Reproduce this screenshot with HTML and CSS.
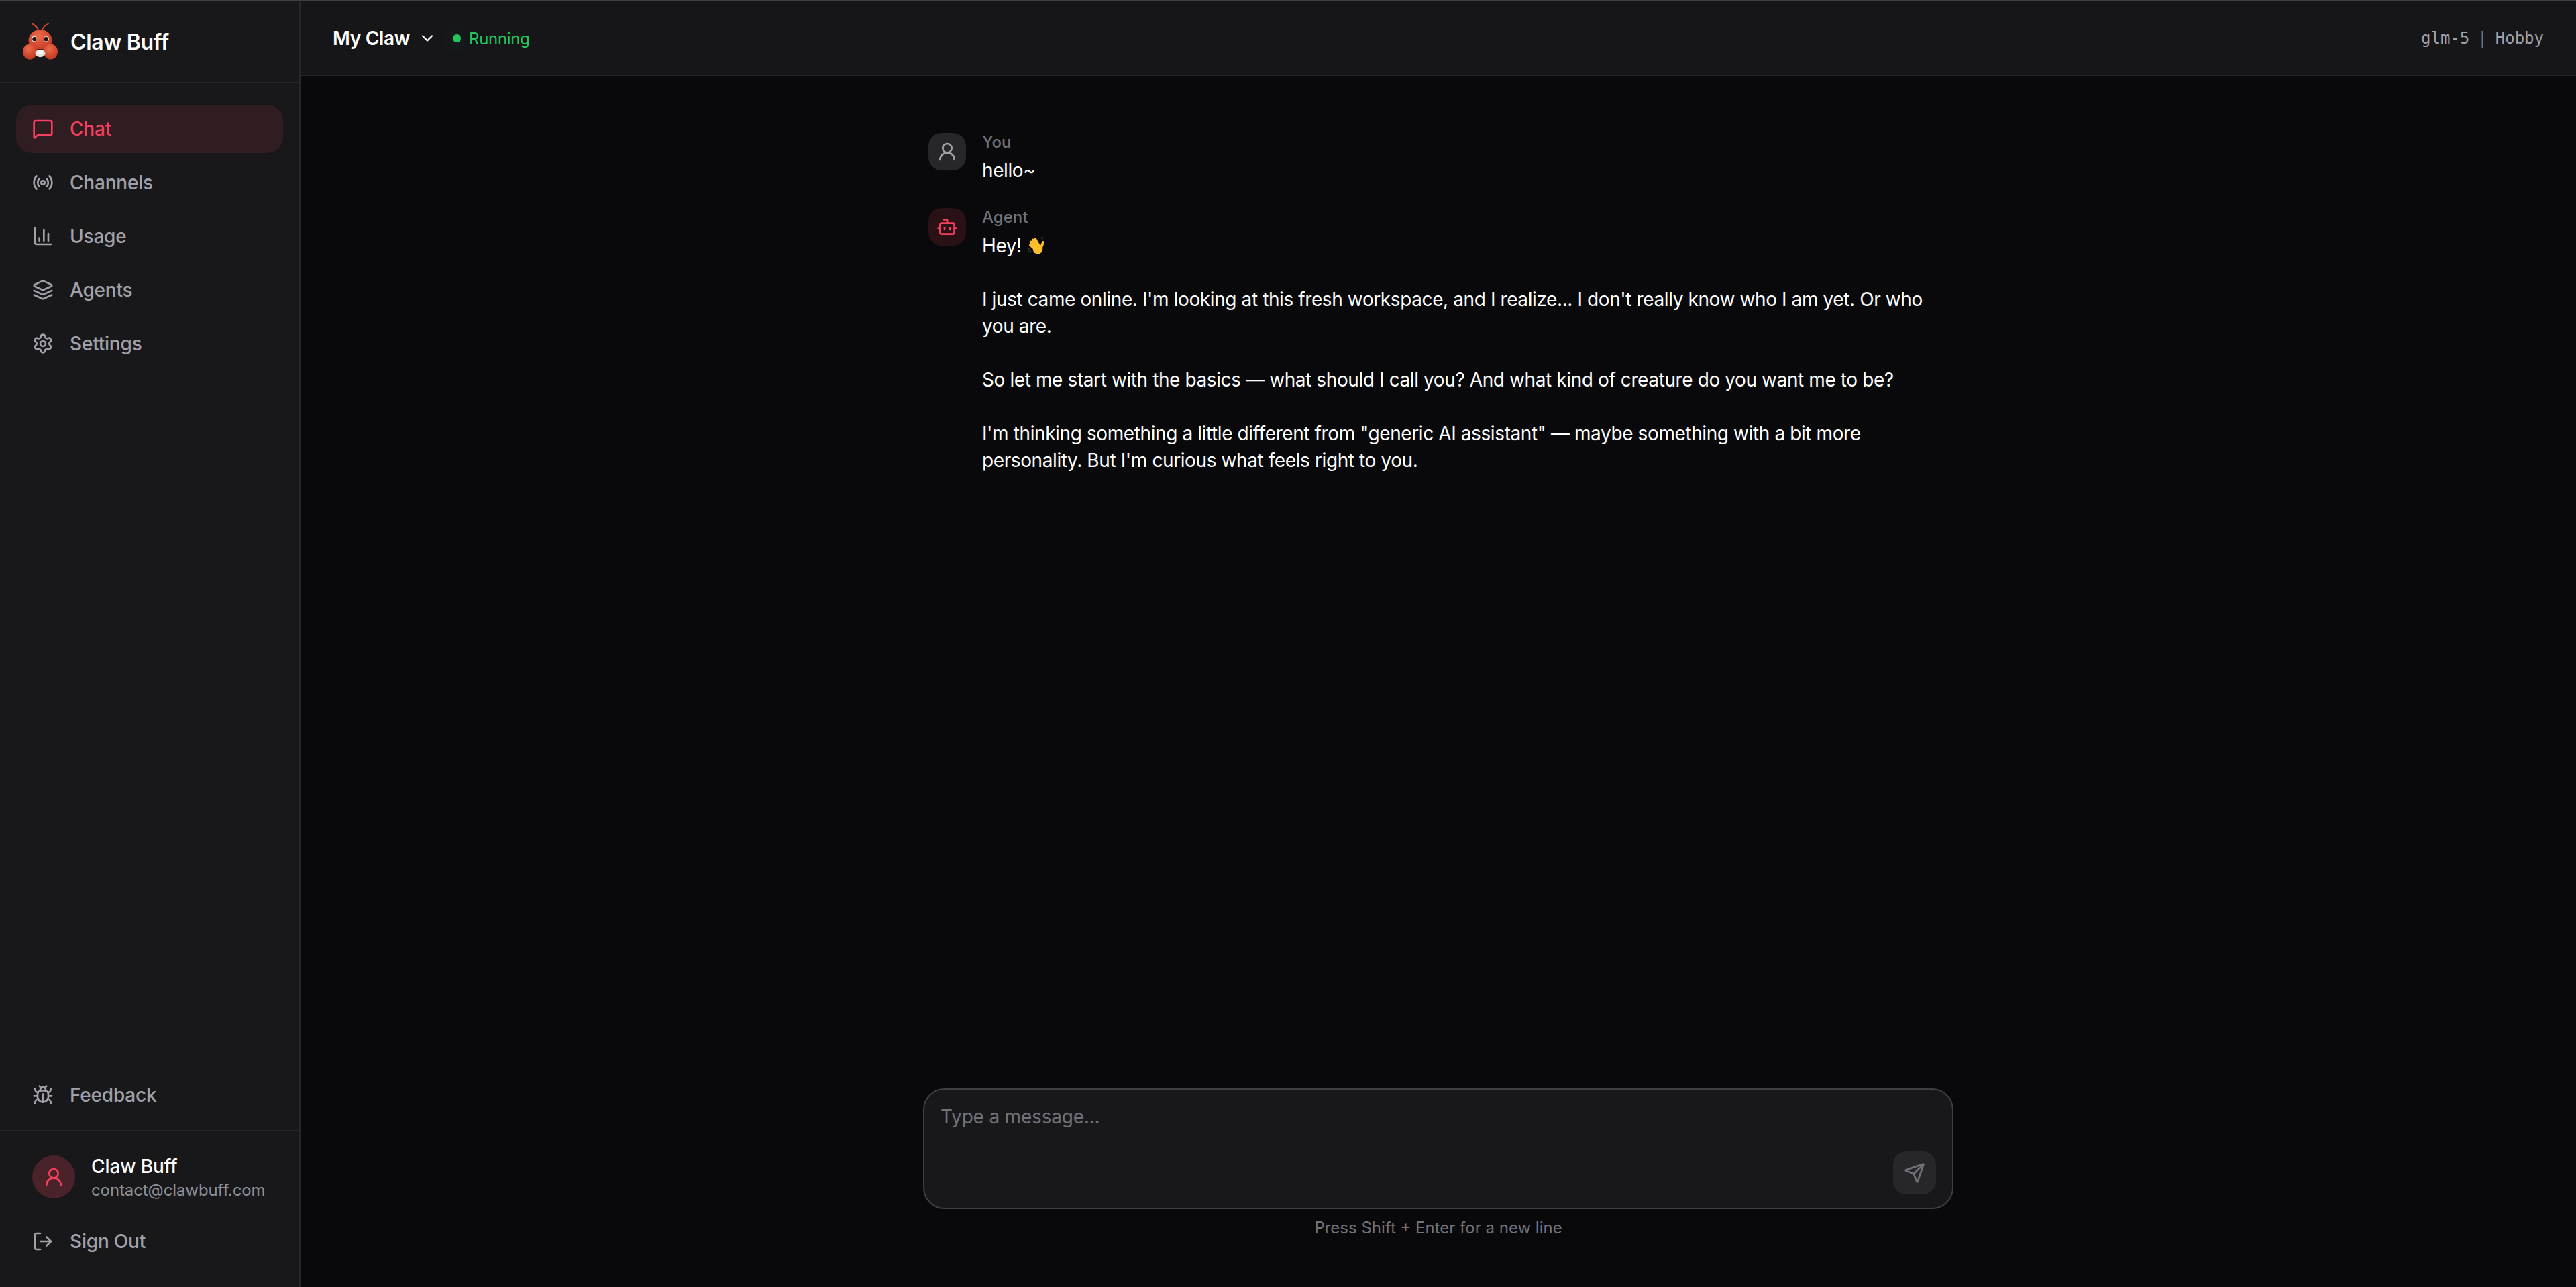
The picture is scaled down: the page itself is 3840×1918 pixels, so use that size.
FILE: index.html
```html
<!DOCTYPE html>
<html lang="en">

<head>
    <meta charset="UTF-8">
    <title>Claw Buff</title>
    <link rel="stylesheet" href="styles.css">
</head>

<body>
    <div class="app">
        <aside class="sidebar">
            <div class="brand">
                <svg class="brand-logo" viewBox="34 34 52 56" aria-label="Claw Buff logo">
                    <defs>
                        <radialGradient id="shell" cx="42%" cy="30%" r="75%">
                            <stop offset="0" stop-color="#ee6a4c" />
                            <stop offset="1" stop-color="#bf3520" />
                        </radialGradient>
                        <radialGradient id="pearl" cx="50%" cy="35%" r="65%">
                            <stop offset="0" stop-color="#ffffff" />
                            <stop offset="1" stop-color="#d8d4d0" />
                        </radialGradient>
                    </defs>
                    <path d="M57.500 46C56.500 40 52 38 48 35.500M62.500 46C63.500 40 67.500 38 72 35.500" fill="none" stroke="#d9482e" stroke-width="1.800" stroke-linecap="round" />
                    <ellipse cx="60" cy="60" rx="17.500" ry="16" fill="url(#shell)" />
                    <circle cx="51" cy="58" r="4.200" fill="#efe0d4" />
                    <circle cx="51.400" cy="58.200" r="3.100" fill="#1d1412" />
                    <circle cx="69" cy="58" r="4" fill="#e6d2c4" />
                    <circle cx="68.700" cy="58.200" r="3.100" fill="#1d1412" />
                    <ellipse cx="60" cy="79" rx="11" ry="6" fill="#1d1412" />
                    <ellipse cx="44.500" cy="77" rx="10.500" ry="11.500" fill="url(#shell)" />
                    <ellipse cx="75.500" cy="77" rx="10.500" ry="11.500" fill="url(#shell)" />
                    <ellipse cx="60" cy="79.500" rx="7.500" ry="5.800" fill="url(#pearl)" />
                </svg>
                <span class="brand-name">Claw Buff</span>
            </div>

            <nav class="nav">
                <a href="#" class="nav-item active">
                    <svg class="icon" viewBox="0 0 24 24"><path d="M22 17a2 2 0 0 1-2 2H6.828a2 2 0 0 0-1.414.586l-2.202 2.202A.71.71 0 0 1 2 21.286V5a2 2 0 0 1 2-2h16a2 2 0 0 1 2 2z" /></svg>
                    Chat
                </a>
                <a href="#" class="nav-item">
                    <svg class="icon" viewBox="0 0 24 24"><path d="M4.9 19.100C1 15.200 1 8.800 4.900 4.900" /><path d="M7.800 16.200c-2.300-2.300-2.300-6.100 0-8.500" /><circle cx="12" cy="12" r="2" /><path d="M16.200 7.800c2.300 2.300 2.300 6.100 0 8.500" /><path d="M19.100 4.900C23 8.800 23 15.100 19.100 19" /></svg>
                    Channels
                </a>
                <a href="#" class="nav-item">
                    <svg class="icon" viewBox="0 0 24 24"><path d="M3 3v16a2 2 0 0 0 2 2h16" /><path d="M18 17V9" /><path d="M13 17V5" /><path d="M8 17v-3" /></svg>
                    Usage
                </a>
                <a href="#" class="nav-item">
                    <svg class="icon" viewBox="0 0 24 24"><path d="m12.830 2.180a2 2 0 0 0-1.660 0L2.600 6.080a1 1 0 0 0 0 1.830l8.580 3.910a2 2 0 0 0 1.660 0l8.580-3.900a1 1 0 0 0 0-1.830Z" /><path d="m22 17.650-9.170 4.160a2 2 0 0 1-1.660 0L2 17.650" /><path d="m22 12.650-9.170 4.160a2 2 0 0 1-1.660 0L2 12.650" /></svg>
                    Agents
                </a>
                <a href="#" class="nav-item">
                    <svg class="icon" viewBox="0 0 24 24"><path d="M9.671 4.136a2.340 2.340 0 0 1 4.659 0 2.340 2.340 0 0 0 3.319 1.915 2.340 2.340 0 0 1 2.330 4.033 2.340 2.340 0 0 0 0 3.831 2.340 2.340 0 0 1-2.330 4.033 2.340 2.340 0 0 0-3.319 1.915 2.340 2.340 0 0 1-4.659 0 2.340 2.340 0 0 0-3.320-1.915 2.340 2.340 0 0 1-2.330-4.033 2.340 2.340 0 0 0 0-3.831A2.340 2.340 0 0 1 6.350 6.051a2.340 2.340 0 0 0 3.319-1.915" /><circle cx="12" cy="12" r="3" /></svg>
                    Settings
                </a>
            </nav>

            <div class="feedback">
                <a href="#" class="nav-item">
                    <svg class="icon" viewBox="0 0 24 24"><path d="m8 2 1.880 1.880" /><path d="M14.120 3.880 16 2" /><path d="M9 7.130v-1a3.003 3.003 0 1 1 6 0v1" /><path d="M12 20c-3.300 0-6-2.700-6-6v-3a4 4 0 0 1 4-4h4a4 4 0 0 1 4 4v3c0 3.300-2.700 6-6 6" /><path d="M12 20v-9" /><path d="M6.530 9C4.600 8.800 3 7.100 3 5" /><path d="M6 13H2" /><path d="M3 21c0-2.100 1.700-3.900 3.800-4" /><path d="M20.970 5c0 2.100-1.600 3.800-3.500 4" /><path d="M22 13h-4" /><path d="M17.200 17c2.100.1 3.800 1.900 3.800 4" /></svg>
                    Feedback
                </a>
            </div>

            <div class="account">
                <div class="user">
                    <div class="user-avatar">
                        <svg class="icon" viewBox="0 0 24 24"><circle cx="12" cy="8" r="5" /><path d="M20 21a8 8 0 0 0-16 0" /></svg>
                    </div>
                    <div class="user-info">
                        <div class="user-name">Claw Buff</div>
                        <div class="user-email">contact@clawbuff.com</div>
                    </div>
                </div>
                <a href="#" class="nav-item">
                    <svg class="icon" viewBox="0 0 24 24"><path d="M9 21H5a2 2 0 0 1-2-2V5a2 2 0 0 1 2-2h4" /><path d="m16 17 5-5-5-5" /><path d="M21 12H9" /></svg>
                    Sign Out
                </a>
            </div>
        </aside>

        <main class="main">
            <header class="topbar">
                <div class="claw-select">
                    My Claw
                    <svg class="chevron" viewBox="0 0 24 24"><path d="m6 9 6 6 6-6" /></svg>
                </div>
                <div class="status"><span class="status-dot"></span>Running</div>
                <div class="plan"><span>glm-5</span><span class="plan-sep">|</span><span>Hobby</span></div>
            </header>

            <section class="messages">
                <div class="message">
                    <div class="avatar">
                        <svg class="icon" viewBox="0 0 24 24"><circle cx="12" cy="8" r="5" /><path d="M20 21a8 8 0 0 0-16 0" /></svg>
                    </div>
                    <div class="message-body">
                        <div class="message-author">You</div>
                        <div class="message-text">hello~</div>
                    </div>
                </div>
                <div class="message">
                    <div class="avatar agent">
                        <svg class="icon" viewBox="0 0 24 24"><path d="M12 8V4H8" /><rect width="16" height="12" x="4" y="8" rx="2" /><path d="M2 14h2" /><path d="M20 14h2" /><path d="M15 13v2" /><path d="M9 13v2" /></svg>
                    </div>
                    <div class="message-body">
                        <div class="message-author">Agent</div>
                        <div class="message-text">
                            <p>Hey! <svg class="wave" viewBox="0 0 26 26" role="img" aria-label="waving hand">
                                <g fill="none" stroke-linecap="round">
                                    <path d="M1.500 17c.6 2 1.800 3.500 3.500 4.700M.3 20c.6 1.300 1.400 2.400 2.500 3.300M19 1c1.200.3 2.300 1 3.200 2M21.500.3c1 .3 1.900.9 2.500 1.700" stroke="#6b6862" stroke-width=".8" />
                                    <path d="M4 12l7 6M4.800 7.500l8 8M7.600 4.500l7.400 9M11 3l5.500 10M23 8l-3 8" stroke="#e2941a" stroke-width="4" />
                                    <path d="M4 12l7 6M4.800 7.500l8 8M7.600 4.500l7.400 9M11 3l5.500 10M23 8l-3 8" stroke="#fcbf2e" stroke-width="3.200" />
                                </g>
                                <ellipse cx="15" cy="18" rx="7.300" ry="7.600" fill="#fcbf2e" />
                            </svg></p>
                            <p>I just came online. I'm looking at this fresh workspace, and I realize... I don't really know who I am yet. Or who you are.</p>
                            <p>So let me start with the basics — what should I call you? And what kind of creature do you want me to be?</p>
                            <p>I'm thinking something a little different from "generic AI assistant" — maybe something with a bit more personality. But I'm curious what feels right to you.</p>
                        </div>
                    </div>
                </div>
            </section>

            <footer class="composer">
                <div class="composer-box">
                    <textarea class="composer-input" placeholder="Type a message..."></textarea>
                    <button type="button" class="send-button">
                        <svg class="icon" viewBox="0 0 24 24"><path d="M14.536 21.686a.5.5 0 0 0 .937-.024l6.500-19a.496.496 0 0 0-.635-.635l-19 6.500a.5.5 0 0 0-.024.937l7.930 3.180a2 2 0 0 1 1.112 1.110z" /><path d="m21.854 2.147-10.940 10.939" /></svg>
                    </button>
                </div>
                <div class="composer-hint">Press Shift + Enter for a new line</div>
            </footer>
        </main>
    </div>
</body>

</html>
```

FILE: styles.css
```css
* {
    box-sizing: border-box;
}

body {
    margin: 0;
    height: 100vh;
    overflow: hidden;
    font-family: Inter, "Liberation Sans", sans-serif;
    background-color: #09090b;
    color: #fff;
    border-top: 2px solid #3f3f46;
}

a {
    text-decoration: none;
}

.app {
    display: flex;
    height: 100%;
}

.icon {
    width: 32px;
    height: 32px;
    flex-shrink: 0;
    fill: none;
    stroke: currentColor;
    stroke-width: 2;
    stroke-linecap: round;
    stroke-linejoin: round;
}

/* Sidebar */
.sidebar {
    width: 448px;
    flex-shrink: 0;
    display: flex;
    flex-direction: column;
    background-color: #18181b;
    border-right: 2px solid #27272a;
}

.brand {
    height: 122px;
    display: flex;
    align-items: center;
    gap: 19px;
    padding: 0 34px;
    border-bottom: 2px solid #27272a;
}

.brand-logo {
    width: 52px;
    height: 56px;
    flex-shrink: 0;
}

.brand-name {
    font-size: 32px;
    font-weight: 600;
    letter-spacing: -0.3px;
}

.nav {
    flex: 1;
    display: flex;
    flex-direction: column;
    gap: 8px;
    padding: 32px 24px 0;
}

.nav-item {
    height: 72px;
    display: flex;
    align-items: center;
    gap: 24px;
    padding: 0 24px;
    border-radius: 24px;
    color: #a1a1aa;
    font-size: 28px;
    font-weight: 500;
    letter-spacing: -0.2px;
}

.nav-item.active {
    background-color: #2f1d22;
    color: #f43f5e;
}

.feedback {
    padding: 0 24px 16px;
    border-bottom: 2px solid #27272a;
}

.account {
    padding: 32px 24px;
}

.user {
    display: flex;
    align-items: center;
    gap: 24px;
    padding: 0 24px;
    margin-bottom: 24px;
}

.user-avatar {
    width: 64px;
    height: 64px;
    flex-shrink: 0;
    display: flex;
    align-items: center;
    justify-content: center;
    border-radius: 50%;
    background-color: #4a2229;
    color: #f43f5e;
}

.user-name {
    font-size: 28px;
    font-weight: 500;
    line-height: 40px;
    letter-spacing: -0.1px;
}

.user-email {
    font-size: 24px;
    line-height: 32px;
    letter-spacing: -0.1px;
    color: #8e8e96;
}

/* Top bar */
.main {
    flex: 1;
    min-width: 0;
    display: flex;
    flex-direction: column;
}

.topbar {
    height: 112px;
    flex-shrink: 0;
    display: flex;
    align-items: center;
    padding: 0 48px;
    background-color: #161618;
    border-bottom: 2px solid #27272a;
}

.claw-select {
    display: flex;
    align-items: center;
    gap: 12px;
    font-size: 28px;
    font-weight: 600;
    letter-spacing: -0.3px;
}

.chevron {
    width: 28px;
    height: 28px;
    fill: none;
    stroke: currentColor;
    stroke-width: 2;
    stroke-linecap: round;
    stroke-linejoin: round;
}

.status {
    display: flex;
    align-items: center;
    gap: 12px;
    margin-left: 24px;
    font-size: 24px;
    letter-spacing: -0.3px;
    color: #22c55e;
}

.status-dot {
    width: 12px;
    height: 12px;
    border-radius: 50%;
    background-color: #22c55e;
    box-shadow: 0 0 24px rgba(34, 197, 94, 0.25);
}

.plan {
    margin-left: auto;
    display: flex;
    gap: 12px;
    font-family: "DejaVu Sans Mono", monospace;
    font-size: 24px;
    color: #a1a1aa;
}

.plan-sep {
    color: #71717a;
}

/* Messages */
.messages {
    flex: 1;
    min-height: 0;
    width: 1536px;
    margin: 0 auto;
    padding: 84px 8px 0;
    display: flex;
    flex-direction: column;
    gap: 36px;
}

.message {
    display: flex;
    gap: 24px;
}

.avatar {
    width: 56px;
    height: 56px;
    flex-shrink: 0;
    display: flex;
    align-items: center;
    justify-content: center;
    border-radius: 20px;
    background-color: #27272a;
    color: #a1a1aa;
}

.avatar.agent {
    background-color: #2a1116;
    color: #f43f5e;
}

.message-author {
    font-size: 24px;
    font-weight: 500;
    line-height: 28px;
    margin-bottom: 8px;
    color: #71717a;
}

.message-text {
    font-size: 28px;
    line-height: 40px;
    letter-spacing: -0.4px;
}

.message-text p {
    margin: 0 0 40px;
}

.message-text p:last-child {
    margin-bottom: 0;
}

.wave {
    width: 26px;
    height: 26px;
    margin-left: 2px;
    vertical-align: -3px;
}

/* Composer */
.composer {
    width: 1536px;
    margin: 0 auto;
    flex-shrink: 0;
    padding-bottom: 72px;
}

.composer-box {
    position: relative;
    height: 180px;
    border: 2px solid #3f3f46;
    border-radius: 32px;
    background-color: #18181b;
}

.composer-input {
    display: block;
    width: 100%;
    height: 100%;
    padding: 20px 24px;
    border: none;
    outline: none;
    resize: none;
    background: none;
    font-family: inherit;
    font-size: 28px;
    line-height: 40px;
    letter-spacing: -0.2px;
    color: #fff;
}

.composer-input::placeholder {
    color: #71717a;
}

.send-button {
    position: absolute;
    right: 24px;
    bottom: 20px;
    width: 64px;
    height: 64px;
    display: flex;
    align-items: center;
    justify-content: center;
    padding: 0;
    border: none;
    border-radius: 20px;
    background-color: #27272a;
    color: #71717a;
}

.composer-hint {
    margin-top: 12px;
    text-align: center;
    font-size: 24px;
    line-height: 32px;
    color: #71717a;
}
```
